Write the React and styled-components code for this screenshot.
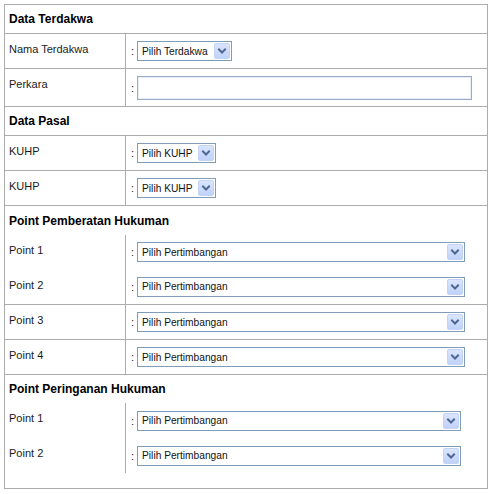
import React from 'react';
import styled, { createGlobalStyle } from 'styled-components';

const GlobalStyle = createGlobalStyle`
  body {
    margin: 4px;
    background: #ffffff;
    font-family: 'Liberation Sans', Arial, sans-serif;
    color: #111;
  }
`;

const FormTable = styled.div`
  width: 484px;
  border: 1px solid #acacac;
  box-sizing: border-box;
`;

const Heading = styled.div`
  height: ${(p) => p.$height || 28}px;
  display: flex;
  align-items: center;
  padding-left: 4px;
  font-size: 12px;
  font-weight: bold;
  color: #000;
  border-top: ${(p) => (p.$first ? 'none' : '1px solid #acacac')};
`;

const Row = styled.div`
  display: grid;
  grid-template-columns: 121px 1fr;
  grid-auto-rows: ${(p) => p.$rowHeight || 34}px;
  border-top: ${(p) => (p.$open ? 'none' : '1px solid #acacac')};
  padding-bottom: ${(p) => p.$tail || 0}px;
`;

const Label = styled.div`
  box-sizing: border-box;
  border-right: 1px solid #acacac;
  padding: 9px 4px 0;
  font-size: 11px;
  line-height: 13px;
  color: #1a1a1a;
`;

const Value = styled.div`
  display: flex;
  align-items: center;
  gap: 3px;
  padding-left: 5px;
`;

const Colon = styled.span`
  font-size: 11px;
  color: #222;
`;

const DropBox = styled.div`
  display: flex;
  align-items: center;
  box-sizing: border-box;
  width: ${(p) => p.$width}px;
  height: 20px;
  padding: 1px;
  border: 1px solid #7f9db9;
  background: #fff;
`;

const DropText = styled.span`
  flex: 1;
  padding-left: 3px;
  font-size: 10.2px;
  color: #111;
  white-space: nowrap;
`;

const DropButton = styled.span`
  display: flex;
  align-items: center;
  justify-content: center;
  width: 16px;
  height: 16px;
  box-sizing: border-box;
  border: 1px solid #c3d3f6;
  border-radius: 2px;
  background: linear-gradient(#dae5fd, #c0d2fa);
`;

const TextField = styled.div`
  box-sizing: border-box;
  width: ${(p) => p.$width}px;
  height: 24px;
  border: 1px solid #97aec9;
  box-shadow: inset 0 0 0 1px #e6edf5;
  background: #fff;
`;

const Chevron = () => (
  <svg width="10" height="10" viewBox="0 0 10 10">
    <polyline
      points="2,3.5 5,6.5 8,3.5"
      fill="none"
      stroke="#4f6690"
      strokeWidth="2"
      strokeLinecap="square"
    />
  </svg>
);

const Dropdown = ({ text, width }) => (
  <DropBox $width={width}>
    <DropText>{text}</DropText>
    <DropButton>
      <Chevron />
    </DropButton>
  </DropBox>
);

const Field = ({ label, children }) => (
  <>
    <Label>{label}</Label>
    <Value>
      <Colon>:</Colon>
      {children}
    </Value>
  </>
);

const App = () => (
  <>
    <GlobalStyle />
    <FormTable>
      <Heading $first>Data Terdakwa</Heading>
      <Row>
        <Field label="Nama Terdakwa">
          <Dropdown text="Pilih Terdakwa" width={95} />
        </Field>
      </Row>
      <Row $rowHeight={37}>
        <Field label="Perkara">
          <TextField $width={335} />
        </Field>
      </Row>

      <Heading>Data Pasal</Heading>
      <Row>
        <Field label="KUHP">
          <Dropdown text="Pilih KUHP" width={79} />
        </Field>
      </Row>
      <Row>
        <Field label="KUHP">
          <Dropdown text="Pilih KUHP" width={79} />
        </Field>
      </Row>

      <Heading $height={29}>Point Pemberatan Hukuman</Heading>
      <Row $open $rowHeight={34.5}>
        <Field label="Point 1">
          <Dropdown text="Pilih Pertimbangan" width={328} />
        </Field>
        <Field label="Point 2">
          <Dropdown text="Pilih Pertimbangan" width={328} />
        </Field>
      </Row>
      <Row>
        <Field label="Point 3">
          <Dropdown text="Pilih Pertimbangan" width={328} />
        </Field>
      </Row>
      <Row>
        <Field label="Point 4">
          <Dropdown text="Pilih Pertimbangan" width={328} />
        </Field>
      </Row>

      <Heading>Point Peringanan Hukuman</Heading>
      <Row $open $rowHeight={35} $tail={15}>
        <Field label="Point 1">
          <Dropdown text="Pilih Pertimbangan" width={324} />
        </Field>
        <Field label="Point 2">
          <Dropdown text="Pilih Pertimbangan" width={324} />
        </Field>
      </Row>
    </FormTable>
  </>
);

export default App;
